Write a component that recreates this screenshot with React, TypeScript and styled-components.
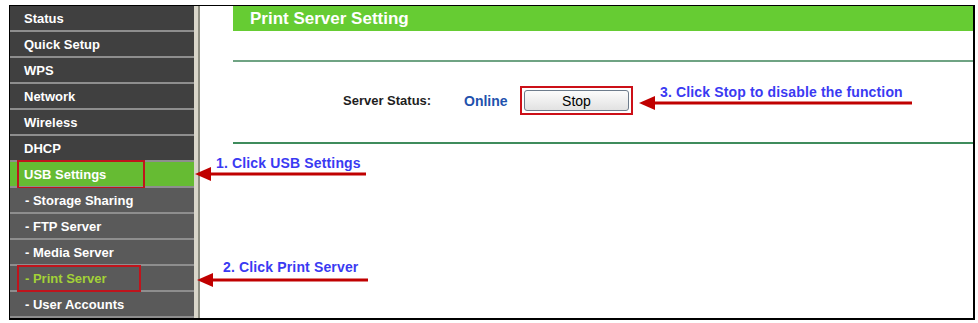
import styled, { createGlobalStyle } from "styled-components";

const GlobalStyle = createGlobalStyle`
  body {
    margin: 0;
    background: #fff;
    font-family: "Liberation Sans", Arial, sans-serif;
  }
`;

const Page = styled.div`
  position: relative;
  width: 978px;
  height: 323px;
  padding: 5px 0 0 9px;
  box-sizing: border-box;
`;

const Frame = styled.div`
  display: flex;
  width: 966px;
  height: 315px;
  box-sizing: border-box;
  overflow: hidden;
  border-top: 1px solid #000;
  border-left: 1px solid #000;
  border-right: 2px solid #000;
  border-bottom: 2px solid #000;
`;

const Sidebar = styled.nav`
  width: 184px;
  display: flex;
  flex-direction: column;
`;

const MenuItem = styled.div<{ $sub?: boolean; $active?: boolean; $current?: boolean }>`
  position: relative;
  height: 24px;
  flex-shrink: 0;
  display: flex;
  align-items: center;
  padding-left: ${(p) => (p.$sub ? 15 : 14)}px;
  border-bottom: 2px solid #8e8e8e;
  background: ${(p) => (p.$active ? "#66bb33" : p.$sub ? "#5a5a5a" : "#404040")};
  color: ${(p) => (p.$current ? "#a3d137" : "#fff")};
  font-size: 13px;
  font-weight: bold;
  white-space: nowrap;
`;

const Highlight = styled.span<{ $w: number; $top: number; $h: number }>`
  position: absolute;
  left: 7px;
  top: ${(p) => p.$top}px;
  width: ${(p) => p.$w}px;
  height: ${(p) => p.$h}px;
  box-sizing: border-box;
  border: 2px solid #c0141c;
`;

const Strip = styled.div`
  width: 6px;
  box-sizing: border-box;
  background: #d9d6ca;
  border-right: 2px solid #8f8f83;
`;

const Content = styled.main`
  flex: 1;
  display: flex;
  flex-direction: column;
  padding-left: 33px;
`;

const Header = styled.h1`
  margin: 0;
  height: 25px;
  display: flex;
  align-items: center;
  padding-left: 17px;
  background: #66cc33;
  color: #fff;
  font-size: 17px;
  font-weight: bold;
`;

const Divider = styled.div<{ $gap: number; $color: string }>`
  margin-top: ${(p) => p.$gap}px;
  height: 2px;
  background: ${(p) => p.$color};
`;

const StatusRow = styled.div`
  height: 77px;
  padding-bottom: 3px;
  display: flex;
  align-items: center;
  padding-left: 110px;
`;

const Label = styled.span`
  font-size: 13px;
  font-weight: bold;
  color: #1e1e1e;
  width: 121px;
`;

const Online = styled.span`
  font-size: 14px;
  font-weight: bold;
  color: #1f52ad;
  width: 56px;
`;

const RedFrame = styled.span`
  display: inline-flex;
  padding: 2px;
  border: 2px solid #cc1018;
`;

const StopButton = styled.button`
  width: 105px;
  height: 21px;
  padding: 0;
  border: 1px solid #6e7c8c;
  border-radius: 3px;
  background: linear-gradient(#fcfcfc, #e2e2e2);
  font-family: "Liberation Sans", Arial, sans-serif;
  font-size: 14px;
  color: #000;
`;

const Overlay = styled.svg`
  position: absolute;
  left: 0;
  top: 0;
  pointer-events: none;
`;

const Note = styled.div<{ $x: number; $y: number }>`
  position: absolute;
  left: ${(p) => p.$x}px;
  top: ${(p) => p.$y}px;
  line-height: 16px;
  font-size: 14px;
  font-weight: bold;
  letter-spacing: 0.15px;
  color: #3a3af2;
  white-space: nowrap;
`;

const menu = [
  { label: "Status" },
  { label: "Quick Setup" },
  { label: "WPS" },
  { label: "Network" },
  { label: "Wireless" },
  { label: "DHCP" },
  { label: "USB Settings", active: true, box: { w: 128, top: -2, h: 29 } },
  { label: "- Storage Sharing", sub: true },
  { label: "- FTP Server", sub: true },
  { label: "- Media Server", sub: true },
  { label: "- Print Server", sub: true, current: true, box: { w: 124, top: -1, h: 27 } },
  { label: "- User Accounts", sub: true },
];

function Arrow({ tip, end, y }: { tip: number; end: number; y: number }) {
  return (
    <g fill="#c00000">
      <line x1={tip + 12} y1={y} x2={end} y2={y} stroke="#c00000" strokeWidth={3} />
      <polygon points={`${tip},${y} ${tip + 16},${y - 7} ${tip + 16},${y + 7}`} />
    </g>
  );
}

export default function App() {
  return (
    <>
      <GlobalStyle />
      <Page>
        <Frame>
          <Sidebar>
            {menu.map((m) => (
              <MenuItem key={m.label} $sub={m.sub} $active={m.active} $current={m.current}>
                {m.label}
                {m.box && <Highlight $w={m.box.w} $top={m.box.top} $h={m.box.h} />}
              </MenuItem>
            ))}
          </Sidebar>
          <Strip />
          <Content>
            <Header>Print Server Setting</Header>
            <Divider $gap={29} $color="#6fa383" />
            <StatusRow>
              <Label>Server Status:</Label>
              <Online>Online</Online>
              <RedFrame>
                <StopButton>Stop</StopButton>
              </RedFrame>
            </StatusRow>
            <Divider $gap={0} $color="#3f8c5c" />
          </Content>
        </Frame>

        <Overlay width={978} height={323}>
          <Arrow tip={195} end={366} y={174} />
          <Arrow tip={197} end={368} y={280} />
          <Arrow tip={639} end={912} y={103} />
        </Overlay>
        <Note $x={216} $y={155}>1. Click USB Settings</Note>
        <Note $x={223} $y={259}>2. Click Print Server</Note>
        <Note $x={660} $y={84}>3. Click Stop to disable the function</Note>
      </Page>
    </>
  );
}
